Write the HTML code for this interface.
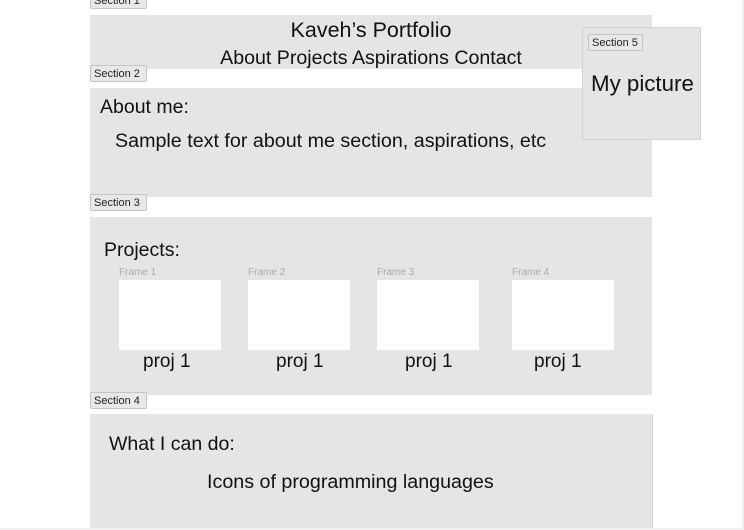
<!DOCTYPE html>
<html><head><style>
html,body{margin:0;padding:0;width:744px;height:530px;overflow:hidden;background:#fff;font-family:"Liberation Sans",sans-serif;color:#111;}
.a{position:absolute;white-space:nowrap;}
.box{position:absolute;background:#e5e5e5;}
.lbl{position:absolute;background:#e8e8e8;border:1px solid #c4c4c4;border-radius:2px;font-size:11px;color:#222;padding:0 3px;height:17px;line-height:16px;box-sizing:border-box;}
.fr{position:absolute;background:#fff;width:102px;height:70px;top:280px;}
.fl{position:absolute;font-size:10px;color:#aaa;top:267px;}
.pj{position:absolute;font-size:19px;top:351px;}
</style></head><body>
<div style="position:absolute;left:742px;top:0;width:2px;height:530px;background:#f0f0f0"></div>
<div style="position:absolute;left:0;top:528px;width:744px;height:2px;background:#f0f0f0"></div>
<div class="lbl" style="left:90px;top:-8px;width:57px;">Section 1</div>
<div class="box" style="left:90px;top:15px;width:562px;height:54px;"></div>
<div class="a" style="left:90px;width:562px;text-align:center;top:18px;font-size:21.5px;">Kaveh’s Portfolio</div>
<div class="a" style="left:90px;width:562px;text-align:center;top:47px;font-size:19.6px;">About Projects Aspirations Contact</div>
<div class="lbl" style="left:90px;top:65px;width:57px;">Section 2</div>
<div class="box" style="left:90px;top:88px;width:562px;height:109px;"></div>
<div class="a" style="left:100px;top:96px;font-size:19.5px;">About me:</div>
<div class="a" style="left:115px;top:130px;font-size:19.7px;">Sample text for about me section, aspirations, etc</div>
<div class="lbl" style="left:90px;top:194px;width:57px;">Section 3</div>
<div class="box" style="left:90px;top:217px;width:562px;height:178px;"></div>
<div class="a" style="left:104px;top:239px;font-size:19.5px;">Projects:</div>
<div class="fl" style="left:119px;">Frame 1</div>
<div class="fl" style="left:248px;">Frame 2</div>
<div class="fl" style="left:377px;">Frame 3</div>
<div class="fl" style="left:512px;">Frame 4</div>
<div class="fr" style="left:119px;"></div>
<div class="fr" style="left:248px;"></div>
<div class="fr" style="left:377px;"></div>
<div class="fr" style="left:512px;"></div>
<div class="pj" style="left:143px;">proj 1</div>
<div class="pj" style="left:276px;">proj 1</div>
<div class="pj" style="left:405px;">proj 1</div>
<div class="pj" style="left:534px;">proj 1</div>
<div class="lbl" style="left:90px;top:392px;width:57px;">Section 4</div>
<div class="box" style="left:90px;top:414px;width:562px;height:114px;border-right:1px solid #d4d4d4;"></div>
<div class="a" style="left:109px;top:433px;font-size:19.5px;">What I can do:</div>
<div class="a" style="left:207px;top:471px;font-size:19.7px;">Icons of programming languages</div>
<div class="box" style="left:582px;top:27px;width:119px;height:113px;border:1px solid #d4d4d4;box-sizing:border-box;"></div>
<div class="lbl" style="left:588px;top:34px;width:55px;">Section 5</div>
<div class="a" style="left:591px;top:71px;font-size:22.3px;">My picture</div>
</body></html>
